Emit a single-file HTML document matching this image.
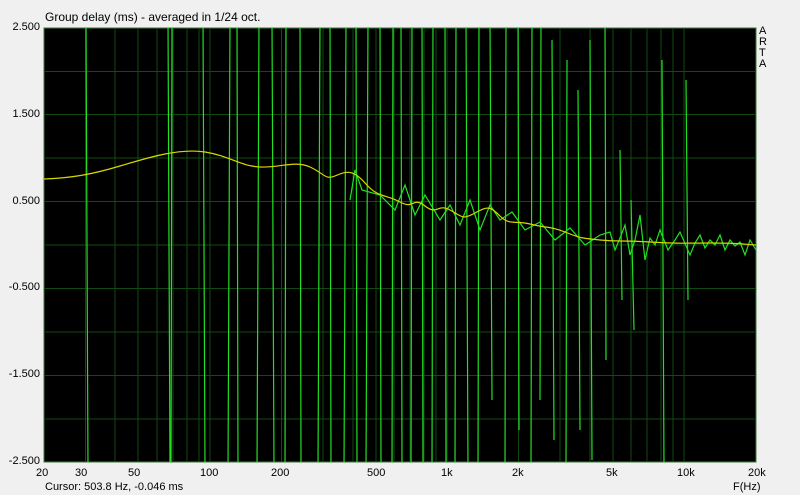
<!DOCTYPE html>
<html><head><style>
body{margin:0;width:800px;height:495px;background:#f0f0f0;font-family:"Liberation Sans",sans-serif;font-size:11px;color:#000;position:relative;overflow:hidden}
.t{position:absolute;white-space:nowrap}
.yl{position:absolute;right:760px;text-align:right}
</style></head><body>
<div class="t" style="left:45px;top:10px;font-size:12px">Group delay (ms) - averaged in 1/24 oct.</div>
<div class="t" style="left:759px;top:26px;line-height:11px;font-size:11px">A<br>R<br>T<br>A</div>
<div class="yl" style="top:21px">2.500</div>
<div class="yl" style="top:108px">1.500</div>
<div class="yl" style="top:195px">0.500</div>
<div class="yl" style="top:281px">-0.500</div>
<div class="yl" style="top:368px">-1.500</div>
<div class="yl" style="top:455px">-2.500</div>
<div class="t" style="left:36px;top:467px">20</div>
<div class="t" style="left:75px;top:467px">30</div>
<div class="t" style="left:128px;top:467px">50</div>
<div class="t" style="left:200px;top:467px">100</div>
<div class="t" style="left:271px;top:467px">200</div>
<div class="t" style="left:367px;top:467px">500</div>
<div class="t" style="left:441px;top:467px">1k</div>
<div class="t" style="left:512px;top:467px">2k</div>
<div class="t" style="left:606px;top:467px">5k</div>
<div class="t" style="left:677px;top:467px">10k</div>
<div class="t" style="left:748px;top:467px">20k</div>
<div class="t" style="left:733px;top:481px">F(Hz)</div>
<div class="t" style="left:45px;top:481px">Cursor: 503.8 Hz, -0.046 ms</div>
<svg style="position:absolute;left:0;top:0" width="800" height="495">
<rect x="44" y="28" width="712" height="434" fill="#000" stroke="#3a7a3a"/>
<g stroke="#124a12" stroke-width="1">
<path d="M44 71.5H756M44 114.5H756M44 158H756M44 201.5H756M44 245H756M44 288.5H756M44 332H756M44 375.5H756M44 419H756"/>
<path d="M85.5 28V462M115 28V462M138 28V462M157 28V462M173 28V462M187 28V462M199 28V462M210 28V462M281.5 28V462M323 28V462M353 28V462M376 28V462M394 28V462M410 28V462M424 28V462M436 28V462M447 28V462M518.5 28V462M560 28V462M590 28V462M613 28V462M631 28V462M647 28V462M661 28V462M673 28V462M684 28V462"/>
</g>
<clipPath id="c"><rect x="44" y="28" width="712" height="434"/></clipPath>
<g clip-path="url(#c)" fill="none" stroke-width="1.2">
<path stroke="#22e022" d="M86 20L88 470M168 20L170 470M171 470L172 20M203 20L205 470M228 470L230 20M237 20L238 470M257 470L259 20M272 20L274 470M285 470L286 20M300 20L301 470M318 470L320 20M330 20L331 470M344 470L346 20M356 20L357 470M366 470L368 20M380 20L381 470M392 470L393 20M401 20L402 470M411 470L412 20M422 20L423 470M432 470L433 20M445 20L446 470M455 470L456 20M466 20L468 470M478 470L479 20M490 20L492 400M505 470L506 20M518 20L519 430M531 470L532 20M540 400L541 20M552 40L554 440M566 470L567 60M578 90L580 430M590 40L592 460M605 20L606 360M620 150L622 300M631 200L634 330M662 60L664 470M686 80L688 300"/>
<path stroke="#22e022" d="M350 200L355 170 362 190 380 195 395 210 405 185 415 215 425 195 440 220 450 205 460 225 470 200 480 230 490 205 500 220 512 212 525 230 540 222 555 240 570 228 585 245 600 235 610 232 615 250 620 238 625 225 630 255 635 240 640 215 645 260 650 238 655 245 660 230 668 250 675 240 680 232 690 255 695 243 700 235 705 248 710 240 715 245 720 235 725 250 730 240 735 246 740 242 745 255 750 240 756 250"/>
<path stroke="#d8d800" d="M44 179C70 178 90 175 120 166S180 148 205 152 240 166 260 167 295 160 310 167 325 180 335 176 352 168 365 183 385 194 400 202 412 196 425 206 437 203 450 210 462 220 475 213 490 206 500 216 515 220 530 224 550 226 565 232 580 238 600 240 620 240 650 242 680 243 710 243 740 244 756 245"/>
</g>
</svg>
</body></html>
